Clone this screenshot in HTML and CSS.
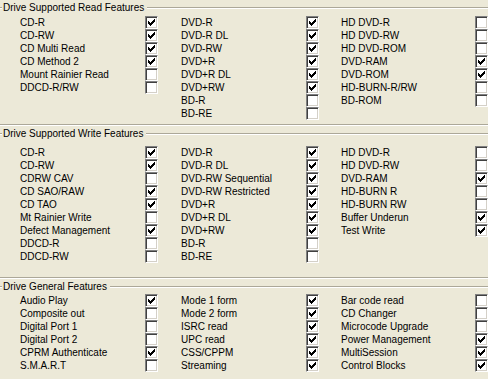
FILE: index.html
```html
<!DOCTYPE html>
<html lang="en">
<head>
    <meta charset="UTF-8">
    <title>Drive Features</title>
    <link rel="stylesheet" href="styles.css">
</head>
<body>
    <svg class="defs" width="0" height="0">
        <symbol id="tick" viewBox="0 0 13 13">
            <path d="M3 5h1v3H3z M4 6h1v3H4z M5 7h1v3H5z M6 6h1v3H6z M7 5h1v3H7z M8 4h1v3H8z M9 3h1v3H9z" fill="#000"/>
        </symbol>
    </svg>

    <div class="group read">
        <div class="legend"><span class="etch lead"></span><span class="title">Drive Supported Read Features</span><span class="etch fill"></span></div>
        <div class="cols">
            <div class="col">
                <div class="row"><span class="name">CD-R</span><span class="cb"><svg><use href="#tick"/></svg></span></div>
                <div class="row"><span class="name">CD-RW</span><span class="cb"><svg><use href="#tick"/></svg></span></div>
                <div class="row"><span class="name">CD Multi Read</span><span class="cb"><svg><use href="#tick"/></svg></span></div>
                <div class="row"><span class="name">CD Method 2</span><span class="cb"><svg><use href="#tick"/></svg></span></div>
                <div class="row"><span class="name">Mount Rainier Read</span><span class="cb"></span></div>
                <div class="row"><span class="name">DDCD-R/RW</span><span class="cb"></span></div>
            </div>
            <div class="col">
                <div class="row"><span class="name">DVD-R</span><span class="cb"><svg><use href="#tick"/></svg></span></div>
                <div class="row"><span class="name">DVD-R DL</span><span class="cb"><svg><use href="#tick"/></svg></span></div>
                <div class="row"><span class="name">DVD-RW</span><span class="cb"><svg><use href="#tick"/></svg></span></div>
                <div class="row"><span class="name">DVD+R</span><span class="cb"><svg><use href="#tick"/></svg></span></div>
                <div class="row"><span class="name">DVD+R DL</span><span class="cb"><svg><use href="#tick"/></svg></span></div>
                <div class="row"><span class="name">DVD+RW</span><span class="cb"><svg><use href="#tick"/></svg></span></div>
                <div class="row"><span class="name">BD-R</span><span class="cb"></span></div>
                <div class="row"><span class="name">BD-RE</span><span class="cb"></span></div>
            </div>
            <div class="col wide">
                <div class="row"><span class="name">HD DVD-R</span><span class="cb"></span></div>
                <div class="row"><span class="name">HD DVD-RW</span><span class="cb"></span></div>
                <div class="row"><span class="name">HD DVD-ROM</span><span class="cb"></span></div>
                <div class="row"><span class="name">DVD-RAM</span><span class="cb"><svg><use href="#tick"/></svg></span></div>
                <div class="row"><span class="name">DVD-ROM</span><span class="cb"><svg><use href="#tick"/></svg></span></div>
                <div class="row"><span class="name">HD-BURN-R/RW</span><span class="cb"></span></div>
                <div class="row"><span class="name">BD-ROM</span><span class="cb"></span></div>
            </div>
        </div>
        <div class="etch"></div>
    </div>

    <div class="group write">
        <div class="legend"><span class="etch lead"></span><span class="title">Drive Supported Write Features</span><span class="etch fill"></span></div>
        <div class="cols">
            <div class="col">
                <div class="row"><span class="name">CD-R</span><span class="cb"><svg><use href="#tick"/></svg></span></div>
                <div class="row"><span class="name">CD-RW</span><span class="cb"><svg><use href="#tick"/></svg></span></div>
                <div class="row"><span class="name">CDRW CAV</span><span class="cb"></span></div>
                <div class="row"><span class="name">CD SAO/RAW</span><span class="cb"><svg><use href="#tick"/></svg></span></div>
                <div class="row"><span class="name">CD TAO</span><span class="cb"><svg><use href="#tick"/></svg></span></div>
                <div class="row"><span class="name">Mt Rainier Write</span><span class="cb"></span></div>
                <div class="row"><span class="name">Defect Management</span><span class="cb"><svg><use href="#tick"/></svg></span></div>
                <div class="row"><span class="name">DDCD-R</span><span class="cb"></span></div>
                <div class="row"><span class="name">DDCD-RW</span><span class="cb"></span></div>
            </div>
            <div class="col">
                <div class="row"><span class="name">DVD-R</span><span class="cb"><svg><use href="#tick"/></svg></span></div>
                <div class="row"><span class="name">DVD-R DL</span><span class="cb"><svg><use href="#tick"/></svg></span></div>
                <div class="row"><span class="name">DVD-RW Sequential</span><span class="cb"><svg><use href="#tick"/></svg></span></div>
                <div class="row"><span class="name">DVD-RW Restricted</span><span class="cb"><svg><use href="#tick"/></svg></span></div>
                <div class="row"><span class="name">DVD+R</span><span class="cb"><svg><use href="#tick"/></svg></span></div>
                <div class="row"><span class="name">DVD+R DL</span><span class="cb"><svg><use href="#tick"/></svg></span></div>
                <div class="row"><span class="name">DVD+RW</span><span class="cb"><svg><use href="#tick"/></svg></span></div>
                <div class="row"><span class="name">BD-R</span><span class="cb"></span></div>
                <div class="row"><span class="name">BD-RE</span><span class="cb"></span></div>
            </div>
            <div class="col wide">
                <div class="row"><span class="name">HD DVD-R</span><span class="cb"></span></div>
                <div class="row"><span class="name">HD DVD-RW</span><span class="cb"></span></div>
                <div class="row"><span class="name">DVD-RAM</span><span class="cb"><svg><use href="#tick"/></svg></span></div>
                <div class="row"><span class="name">HD-BURN R</span><span class="cb"></span></div>
                <div class="row"><span class="name">HD-BURN RW</span><span class="cb"></span></div>
                <div class="row"><span class="name">Buffer Underun</span><span class="cb"><svg><use href="#tick"/></svg></span></div>
                <div class="row"><span class="name">Test Write</span><span class="cb"><svg><use href="#tick"/></svg></span></div>
            </div>
        </div>
        <div class="etch"></div>
    </div>

    <div class="group general">
        <div class="legend"><span class="etch lead"></span><span class="title">Drive General Features</span><span class="etch fill"></span></div>
        <div class="cols">
            <div class="col">
                <div class="row"><span class="name">Audio Play</span><span class="cb"><svg><use href="#tick"/></svg></span></div>
                <div class="row"><span class="name">Composite out</span><span class="cb"></span></div>
                <div class="row"><span class="name">Digital Port 1</span><span class="cb"></span></div>
                <div class="row"><span class="name">Digital Port 2</span><span class="cb"></span></div>
                <div class="row"><span class="name">CPRM Authenticate</span><span class="cb"><svg><use href="#tick"/></svg></span></div>
                <div class="row"><span class="name">S.M.A.R.T</span><span class="cb"></span></div>
            </div>
            <div class="col">
                <div class="row"><span class="name">Mode 1 form</span><span class="cb"><svg><use href="#tick"/></svg></span></div>
                <div class="row"><span class="name">Mode 2 form</span><span class="cb"><svg><use href="#tick"/></svg></span></div>
                <div class="row"><span class="name">ISRC read</span><span class="cb"><svg><use href="#tick"/></svg></span></div>
                <div class="row"><span class="name">UPC read</span><span class="cb"><svg><use href="#tick"/></svg></span></div>
                <div class="row"><span class="name">CSS/CPPM</span><span class="cb"><svg><use href="#tick"/></svg></span></div>
                <div class="row"><span class="name">Streaming</span><span class="cb"><svg><use href="#tick"/></svg></span></div>
            </div>
            <div class="col wide">
                <div class="row"><span class="name">Bar code read</span><span class="cb"></span></div>
                <div class="row"><span class="name">CD Changer</span><span class="cb"></span></div>
                <div class="row"><span class="name">Microcode Upgrade</span><span class="cb"></span></div>
                <div class="row"><span class="name">Power Management</span><span class="cb"><svg><use href="#tick"/></svg></span></div>
                <div class="row"><span class="name">MultiSession</span><span class="cb"><svg><use href="#tick"/></svg></span></div>
                <div class="row"><span class="name">Control Blocks</span><span class="cb"><svg><use href="#tick"/></svg></span></div>
            </div>
        </div>
    </div>
</body>
</html>
```

FILE: styles.css
```css
html, body {
    margin: 0;
    padding: 0;
}
body {
    width: 488px;
    height: 379px;
    overflow: hidden;
    background-color: #ece9d8;
    font-family: "Liberation Sans", Arial, sans-serif;
    font-size: 10px;
    color: #000;
}
.defs {
    position: absolute;
}
.group {
    padding-top: 1px;
}
.legend {
    display: flex;
    align-items: center;
    height: 14px;
}
.etch {
    display: block;
    height: 0;
    border-top: 1px solid #aca899;
    border-bottom: 1px solid #fff;
}
.lead {
    width: 2px;
}
.fill {
    flex: 1;
}
.title {
    padding: 0 3px 0 1px;
    line-height: 14px;
    white-space: nowrap;
}
.cols {
    display: grid;
    grid-template-columns: 161px 160px 1fr;
    padding-left: 20px;
}
.read .cols {
    padding-top: 1px;
    padding-bottom: 4px;
}
.write .cols {
    padding-top: 5px;
    padding-bottom: 14px;
}
.row {
    display: flex;
    align-items: center;
    height: 13px;
}
.name {
    width: 125px;
    white-space: nowrap;
    line-height: 13px;
}
.wide .name {
    width: 134px;
}
.cb {
    box-sizing: border-box;
    width: 13px;
    height: 13px;
    flex: none;
    background: #fff;
    border-top: 1px solid #808080;
    border-left: 1px solid #808080;
    border-right: 1px solid #fff;
    border-bottom: 1px solid #fff;
    box-shadow: inset 1px 1px 0 #404040, inset -1px -1px 0 #d4d0c8;
    position: relative;
}
.cb svg {
    position: absolute;
    left: -1px;
    top: -1px;
    width: 13px;
    height: 13px;
}
```
